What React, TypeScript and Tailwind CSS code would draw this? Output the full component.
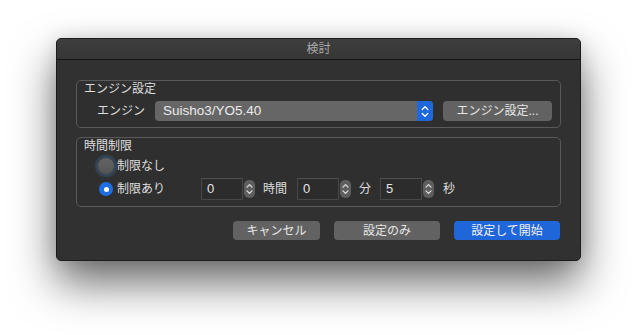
import React from 'react';

const FONT = { fontFamily: '"Liberation Sans", "Noto Sans CJK JP", sans-serif' };

function Stepper({ className = '' }: { className?: string }) {
  return (
    <div className={`flex h-[18px] w-[11px] items-center justify-center rounded-[5px] bg-[#5e5e5e] ${className}`}>
      <svg width="7" height="12" viewBox="0 0 7 12" fill="none" stroke="#e2e2e2" strokeWidth="1.2" strokeLinecap="round" strokeLinejoin="round">
        <path d="M1 4.2 L3.5 1.7 L6 4.2" />
        <path d="M1 7.8 L3.5 10.3 L6 7.8" />
      </svg>
    </div>
  );
}

function NumberField({ value, width }: { value: string; width: string }) {
  return (
    <div className="flex items-center gap-[1px]">
      <div className={`flex h-[22px] ${width} items-center border border-[#474747] border-t-[#505050] bg-[#2c2c2c] pl-[5px] text-[13px] text-[#e4e4e4]`}>
        {value}
      </div>
      <Stepper />
    </div>
  );
}

function PushButton({ label, primary = false, width }: { label: string; primary?: boolean; width: string }) {
  return (
    <button
      className={`flex h-[19px] ${width} items-center justify-center rounded-[4px] text-[12px] leading-none ${
        primary ? 'bg-[#1f66d8] text-[#f2f2f2]' : 'bg-[#626262] text-[#e6e6e6]'
      }`}
    >
      {label}
    </button>
  );
}

export default function App() {
  return (
    <div className="h-[335px] w-[637px] bg-white pl-[56px] pt-[38px]" style={FONT}>
      {/* Dialog window */}
      <div className="flex w-[525px] flex-col overflow-hidden rounded-[5px] border border-[#1c1c1c] bg-[#313131] shadow-[0_22px_44px_rgba(0,0,0,0.58),0_0_18px_rgba(0,0,0,0.12)]">
        {/* Title bar */}
        <div className="flex h-[21px] items-center justify-center border-b border-[#141414] bg-gradient-to-b from-[#3e3e3e] to-[#363636] text-[12px] text-[#a9a9a9]">
          検討
        </div>

        <div className="flex flex-col px-[19px] pb-[20px] pt-[20px]">
          {/* Engine group */}
          <div className="flex h-[48px] flex-col rounded-[5px] border border-[#5a5a5a] bg-[#2f2f2f]">
            <div className="pl-[7px] text-[12px] leading-[16px] text-[#dedede]">エンジン設定</div>
            <div className="mt-[4px] flex h-[20px] items-center pl-[20px]">
              <span className="w-[58px] text-[12px] text-[#dedede]">エンジン</span>
              <div className="flex h-[20px] w-[278px] items-center overflow-hidden rounded-[4px] bg-[#666666]">
                <span className="flex-1 pl-[8px] text-[13.5px] text-[#ececec]">Suisho3/YO5.40</span>
                <div className="flex h-full w-[16px] items-center justify-center bg-[#1f68dc]">
                  <svg width="8" height="13" viewBox="0 0 8 13" fill="none" stroke="#ffffff" strokeWidth="1.3" strokeLinecap="round" strokeLinejoin="round">
                    <path d="M1.2 4.5 L4 1.7 L6.8 4.5" />
                    <path d="M1.2 8.5 L4 11.3 L6.8 8.5" />
                  </svg>
                </div>
              </div>
              <button className="ml-[10px] flex h-[20px] w-[109px] items-center justify-center rounded-[4px] bg-[#626262] text-[12px] text-[#e6e6e6]">
                エンジン設定...
              </button>
            </div>
          </div>

          {/* Time limit group */}
          <div className="mt-[9px] flex h-[70px] flex-col rounded-[5px] border border-[#5a5a5a] bg-[#2f2f2f]">
            <div className="pl-[7px] text-[12px] leading-[16px] text-[#dedede]">時間制限</div>
            <div className="mt-[3px] flex h-[18px] items-center pl-[20px]">
              <div className="flex w-[18px] items-center justify-center">
                <div className="h-[16px] w-[16px] rounded-full bg-gradient-to-b from-[#636363] to-[#555555] shadow-[0_0_2px_3px_rgba(55,80,105,0.75)]" />
              </div>
              <span className="ml-[2px] text-[12px] text-[#dedede]">制限なし</span>
            </div>
            <div className="mt-[3px] flex h-[22px] items-center pl-[20px]">
              <div className="flex w-[18px] items-center justify-center">
                <div className="flex h-[14px] w-[14px] items-center justify-center rounded-full bg-[#1f6de2]">
                  <div className="h-[5px] w-[5px] rounded-full bg-white" />
                </div>
              </div>
              <span className="ml-[2px] w-[84px] text-[12px] text-[#dedede]">制限あり</span>
              <NumberField value="0" width="w-[42px]" />
              <span className="ml-[8px] w-[34px] text-[12px] text-[#dedede]">時間</span>
              <NumberField value="0" width="w-[42px]" />
              <span className="ml-[8px] w-[21px] text-[12px] text-[#dedede]">分</span>
              <NumberField value="5" width="w-[42px]" />
              <span className="ml-[9px] text-[12px] text-[#dedede]">秒</span>
            </div>
          </div>

          {/* Buttons */}
          <div className="mt-[14px] flex justify-end gap-[14px] pr-[1px]">
            <PushButton label="キャンセル" width="w-[87px]" />
            <PushButton label="設定のみ" width="w-[106px]" />
            <PushButton label="設定して開始" width="w-[106px]" primary />
          </div>
        </div>
      </div>
    </div>
  );
}
